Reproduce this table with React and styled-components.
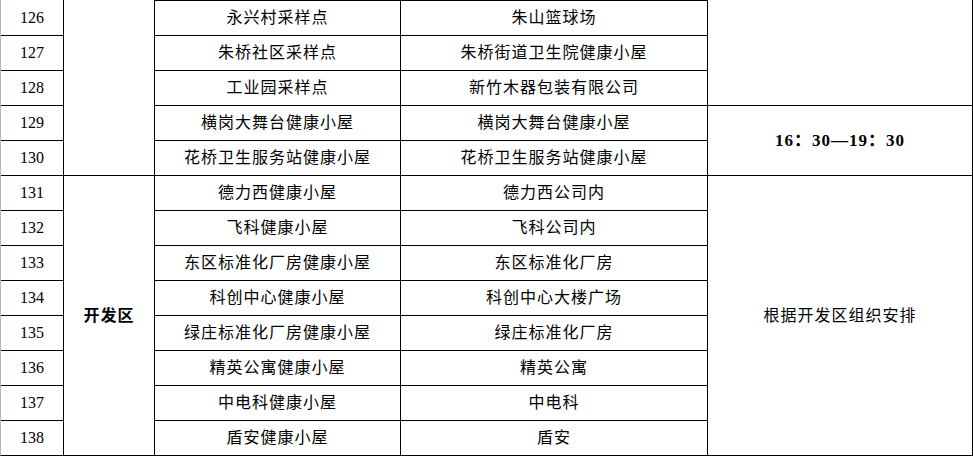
import styled, { createGlobalStyle } from "styled-components";

const GlobalStyle = createGlobalStyle`
  html, body {
    margin: 0;
    padding: 0;
    background: #fff;
  }
`;

const rows = [
  ["126", "永兴村采样点", "朱山篮球场"],
  ["127", "朱桥社区采样点", "朱桥街道卫生院健康小屋"],
  ["128", "工业园采样点", "新竹木器包装有限公司"],
  ["129", "横岗大舞台健康小屋", "横岗大舞台健康小屋"],
  ["130", "花桥卫生服务站健康小屋", "花桥卫生服务站健康小屋"],
  ["131", "德力西健康小屋", "德力西公司内"],
  ["132", "飞科健康小屋", "飞科公司内"],
  ["133", "东区标准化厂房健康小屋", "东区标准化厂房"],
  ["134", "科创中心健康小屋", "科创中心大楼广场"],
  ["135", "绿庄标准化厂房健康小屋", "绿庄标准化厂房"],
  ["136", "精英公寓健康小屋", "精英公寓"],
  ["137", "中电科健康小屋", "中电科"],
  ["138", "盾安健康小屋", "盾安"],
];

const App = () => {
  return (
    <>
      <GlobalStyle />
      <Sheet>
        {rows.map(([no, name, place], i) => (
          <Row key={no}>
            <Cell $col={1} $row={i + 1}>
              {no}
            </Cell>
            <Cell $col={3} $row={i + 1} $top={i === 0} $spaced>
              {name}
            </Cell>
            <Cell $col={4} $row={i + 1} $top={i === 0} $spaced>
              {place}
            </Cell>
          </Row>
        ))}

        <Cell $col={2} $row="1 / span 5" />
        <Cell $col={2} $row="6 / span 8" $bold $spaced>
          开发区
        </Cell>

        <Cell $col={5} $row="1 / span 3" />
        <Cell $col={5} $row="4 / span 2" $bold $spaced $size={17}>
          16：30—19：30
        </Cell>
        <Cell $col={5} $row="6 / span 8" $spaced>
          根据开发区组织安排
        </Cell>
      </Sheet>
    </>
  );
};

const Sheet = styled.div`
  display: grid;
  grid-template-columns: 62px 90px 245px 306px 264px;
  grid-template-rows: 35px repeat(12, 34px);
  gap: 1px;
  width: 971px;
  background: #000;
  border-left: 1px solid #aab6c8;
  border-right: 1px solid #000;
  border-bottom: 1px solid #000;
  font-family: "Liberation Serif", "Noto Sans CJK SC", serif;
  color: #000;
`;

const Row = styled.div`
  display: contents;
`;

const Cell = styled.div`
  grid-column: ${(p) => p.$col};
  grid-row: ${(p) => p.$row};
  display: flex;
  align-items: center;
  justify-content: center;
  box-sizing: border-box;
  background: #fff;
  border-top: ${(p) => (p.$top ? "1px solid #000" : "none")};
  font-size: ${(p) => p.$size || 16}px;
  letter-spacing: ${(p) => (p.$spaced ? "1px" : "0")};
  font-weight: ${(p) => (p.$bold ? 700 : 400)};
  white-space: nowrap;
  line-height: 1;
`;

export default App;
